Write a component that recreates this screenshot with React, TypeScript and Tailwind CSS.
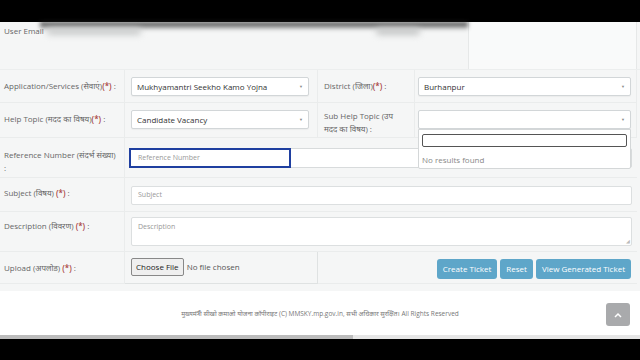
import React from "react";

const font = { fontFamily: '"Open Sans", "Noto Sans", "Noto Sans Devanagari", sans-serif' };

function Req() {
  return <span className="text-[#a94442] font-semibold">(*)</span>;
}

function Select({ value }: { value?: string }) {
  return (
    <div className="h-[19px] w-full bg-white border border-[#d2d6d8] rounded-[2px] flex items-center justify-between px-[5px] shadow-[0_1px_1px_rgba(0,0,0,0.04)]">
      <span className="text-[8px] text-[#333]">{value}</span>
      <span className="text-[4px] text-[#888]">▼</span>
    </div>
  );
}

function Label({ children }: { children: React.ReactNode }) {
  return <div className="text-[8px] leading-[13px] text-[#666]">{children}</div>;
}

export default function App() {
  return (
    <div className="w-[640px] h-[360px] bg-black flex flex-col overflow-hidden" style={font}>
      {/* top letterbox */}
      <div className="h-[22px] shrink-0 bg-black" />

      <div className="flex-1 flex flex-col bg-[#f5f6f6]">
        {/* user email row */}
        <div className="h-[48px] flex border-b border-[#eceeee] relative">
          <div className="w-[468px] relative">
            <div className="absolute left-[40px] right-0 top-0 h-[8px] bg-gradient-to-b from-[#222] to-transparent blur-[2px]" />
            <div className="flex items-center gap-[3px] px-[4px] pt-[3px] text-[8px] text-[#666]">
              <span>User Email</span>
              <span className="w-[94px] h-[7px] bg-[#c9cbcb] rounded-full blur-[3px]" />
              <span className="ml-[232px] w-[44px] h-[7px] bg-[#c4c6c6] rounded-full blur-[3px]" />
            </div>
          </div>
          <div className="w-[169px] bg-[#f9fafa] border-l border-r border-[#e6e8e8]" />
        </div>

        {/* form grid */}
        <div className="grid grid-cols-[125px_193px_97px_222px] w-[637px]">
          {/* application row */}
          <div className="h-[33px] border-b border-r border-[#eaecec] pl-[4px] pt-[9px]">
            <Label>
              Application/Services (सेवाएं)<Req /> :
            </Label>
          </div>
          <div className="h-[33px] border-b border-r border-[#eaecec] pl-[6px] pr-[8px] pt-[7px]">
            <Select value="Mukhyamantri Seekho Kamo Yojna" />
          </div>
          <div className="h-[33px] border-b border-r border-[#eaecec] pl-[6px] pt-[9px]">
            <Label>
              District (जिला)<Req /> :
            </Label>
          </div>
          <div className="h-[33px] border-b border-r border-[#eaecec] pl-[3px] pr-[5px] pt-[7px]">
            <Select value="Burhanpur" />
          </div>

          {/* help topic row */}
          <div className="h-[35px] border-b border-r border-[#eaecec] pl-[4px] pt-[9px]">
            <Label>
              Help Topic (मदद का विषय)<Req /> :
            </Label>
          </div>
          <div className="h-[35px] border-b border-r border-[#eaecec] pl-[6px] pr-[8px] pt-[7px]">
            <Select value="Candidate Vacancy" />
          </div>
          <div className="h-[35px] border-b border-r border-[#eaecec] pl-[6px] pr-[14px] pt-[6px]">
            <Label>Sub Help Topic (उप मदद का विषय) :</Label>
          </div>
          <div className="h-[35px] border-b border-r border-[#eaecec] pl-[3px] pr-[5px] pt-[7px] relative">
            <Select />
            <div className="absolute left-[3px] right-[5px] top-[26px] h-[40px] bg-white border border-[#d4d7d8] rounded-b-[2px] z-10 px-[3px] pt-[4px]">
              <div className="h-[13px] border-[1.5px] border-[#555] rounded-[2px] bg-white" />
              <div className="text-[8px] text-[#888] pt-[7px]">No results found</div>
            </div>
          </div>

          {/* reference number row */}
          <div className="h-[40px] border-b border-r border-[#eaecec] pl-[4px] pr-[8px] pt-[10px]">
            <Label>Reference Number (संदर्भ संख्या) :</Label>
          </div>
          <div className="col-span-3 h-[40px] border-b border-[#eaecec] pl-[4px] pr-[5px] pt-[10px] relative">
            <div className="h-[20px] bg-white border border-[#d8dbdc] rounded-[2px]" />
            <div className="absolute left-[4px] top-[10px] w-[162px] h-[20px] border-2 border-[#1f3fa0] flex items-center px-[7px]">
              <span className="text-[7px] text-[#999]">Reference Number</span>
            </div>
          </div>

          {/* subject row */}
          <div className="h-[34px] border-b border-r border-[#eaecec] pl-[4px] pt-[8px]">
            <Label>
              Subject (विषय) <Req /> :
            </Label>
          </div>
          <div className="col-span-3 h-[34px] border-b border-[#eaecec] pl-[6px] pr-[5px] pt-[8px]">
            <div className="h-[19px] bg-white border border-[#dcdfe0] rounded-[2px] flex items-center px-[6px]">
              <span className="text-[7px] text-[#999]">Subject</span>
            </div>
          </div>

          {/* description row */}
          <div className="h-[40px] border-b border-r border-[#eaecec] pl-[4px] pt-[7px]">
            <Label>
              Description (विवरण) <Req /> :
            </Label>
          </div>
          <div className="col-span-3 h-[40px] border-b border-[#eaecec] pl-[6px] pr-[5px] pt-[5px]">
            <div className="h-[29px] bg-white border border-[#dcdfe0] rounded-[2px] px-[6px] pt-[4px] relative">
              <span className="text-[7px] text-[#999] block">Description</span>
              <span className="absolute right-[1px] bottom-[1px] text-[5px] text-[#bbb] leading-none">◢</span>
            </div>
          </div>

          {/* upload row */}
          <div className="h-[32px] border-b border-r border-[#eaecec] pl-[4px] pt-[9px]">
            <Label>
              Upload (अपलोड) <Req /> :
            </Label>
          </div>
          <div className="h-[32px] border-b border-r border-[#dfe2e2] pl-[6px] pt-[6px] flex items-start gap-[3px]">
            <span className="h-[18px] px-[4px] flex items-center bg-[#efefef] border border-[#888] rounded-[2px] text-[8px] text-[#222]">
              Choose File
            </span>
            <span className="text-[8px] text-[#555] pt-[3px]">No file chosen</span>
          </div>
          <div className="col-span-2 h-[32px] border-b border-[#eaecec] pr-[6px] pt-[7px] flex justify-end gap-[3px]">
            {["Create Ticket", "Reset", "View Generated Ticket"].map((b) => (
              <span
                key={b}
                className="h-[20px] px-[6px] flex items-center bg-[#5ea6c9] rounded-[3px] text-[8px] text-white"
              >
                {b}
              </span>
            ))}
          </div>
        </div>

        <div className="flex-1" />
      </div>

      {/* footer */}
      <div className="h-[44px] shrink-0 bg-white flex items-center justify-center relative">
        <span className="text-[6.5px] text-[#777] pt-[2px]">
          मुख्यमंत्री सीखो कमाओ योजना कॉपीराइट (C) MMSKY.mp.gov.in, सभी अधिकार सुरक्षित। All Rights Reserved
        </span>
        <div className="absolute right-[10px] top-[12px] w-[24px] h-[23px] bg-[#a9aaac] rounded-[3px] flex items-center justify-center">
          <svg width="8" height="6" viewBox="0 0 8 6">
            <path d="M1 5 L4 2 L7 5" stroke="white" strokeWidth="1.5" fill="none" />
          </svg>
        </div>
      </div>

      {/* scrollbar */}
      <div className="h-[4px] shrink-0 bg-[#e6e6e6] flex">
        <div className="w-[353px] bg-[#bcbcbc]" />
      </div>

      {/* bottom letterbox */}
      <div className="h-[21px] shrink-0 bg-black" />
    </div>
  );
}
